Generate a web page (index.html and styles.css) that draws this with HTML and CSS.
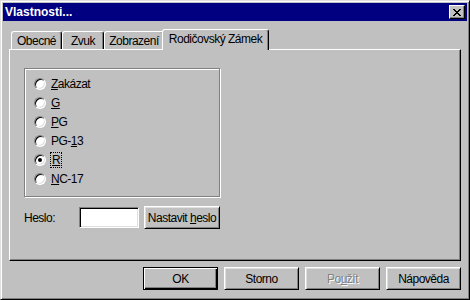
FILE: index.html
```html
<!DOCTYPE html>
<html lang="cs">
<head>
    <meta charset="UTF-8">
    <meta name="viewport" content="width=device-width, initial-scale=1.0">
    <title>Vlastnosti</title>
    <link rel="stylesheet" href="styles.css">
</head>
<body>
    <div class="window">
        <div class="titlebar">
            <span class="title">Vlastnosti...</span>
            <span class="close">
                <svg width="8" height="7" viewBox="0 0 8 7" shape-rendering="crispEdges">
                    <path d="M0 0h2v1h1v1h2V1h1V0h2v1H7v1H6v1H5v1h1v1h1v1h1v1H6V6H5V5H3v1H2v1H0V6h1V5h1V4h1V3H2V2H1V1H0z" fill="#000"/>
                </svg>
            </span>
        </div>

        <div class="content">
            <div class="tabs">
                <div class="tab tab-general">Obecné</div>
                <div class="tab tab-sound">Zvuk</div>
                <div class="tab tab-display">Zobrazení</div>
                <div class="tab active">Rodičovský Zámek</div>
            </div>

            <div class="panel">
                <div class="group">
                    <div class="radio"><span class="circle"></span><span><u>Z</u>akázat</span></div>
                    <div class="radio"><span class="circle"></span><span><u>G</u></span></div>
                    <div class="radio"><span class="circle"></span><span><u>P</u>G</span></div>
                    <div class="radio"><span class="circle"></span><span>PG-<u>1</u>3</span></div>
                    <div class="radio"><span class="circle checked"></span><span class="focus"><u>R</u></span></div>
                    <div class="radio"><span class="circle"></span><span><u>N</u>C-17</span></div>
                </div>

                <div class="password-row">
                    <span class="label">Heslo:</span>
                    <span class="input"></span>
                    <button class="btn wide">Nastavit <u>h</u>eslo</button>
                </div>
            </div>

            <div class="actions">
                <button class="btn default">OK</button>
                <button class="btn">Storno</button>
                <button class="btn disabled">Po<u>u</u>žít</button>
                <button class="btn">Nápověda</button>
            </div>
        </div>
    </div>
</body>
</html>
```

FILE: styles.css
```css
* {
    box-sizing: border-box;
}

body {
    margin: 0;
    font-family: "Liberation Sans", Arial, sans-serif;
    font-size: 12px;
    letter-spacing: -0.5px;
    color: #000;
    background-color: #c0c0c0;
}

.window {
    width: 470px;
    height: 300px;
    padding: 2px;
    display: flex;
    flex-direction: column;
    background-color: #c0c0c0;
    border: 1px solid;
    border-color: #dfdfdf #000 #000 #dfdfdf;
    box-shadow: inset 1px 1px #fff, inset -1px -1px #808080;
}

.titlebar {
    height: 18px;
    padding: 0 2px;
    display: flex;
    align-items: center;
    justify-content: space-between;
    background-color: #000080;
    color: #fff;
    font-weight: bold;
    letter-spacing: 0;
}

.close {
    width: 16px;
    height: 14px;
    display: flex;
    align-items: center;
    justify-content: center;
    background-color: #c0c0c0;
    border: 1px solid;
    border-color: #fff #000 #000 #fff;
    box-shadow: inset -1px -1px #808080;
}

.content {
    flex: 1;
    padding: 8px 6px 0 6px;
    display: flex;
    flex-direction: column;
}

.tabs {
    height: 20px;
    padding-left: 2px;
    display: flex;
    align-items: flex-end;
}

.tab {
    height: 18px;
    display: flex;
    align-items: center;
    justify-content: center;
    white-space: nowrap;
    border: 1px solid;
    border-bottom: none;
    border-color: #fff #000 #000 #fff;
    border-radius: 3px 3px 0 0;
    box-shadow: inset -1px 0 #808080;
}

.tab-general {
    width: 51px;
}

.tab-sound {
    width: 42px;
}

.tab-display {
    width: 60px;
}

.tab.active {
    width: 107px;
    height: 21px;
    margin: 0 -2px -1px;
    padding-bottom: 2px;
    position: relative;
    z-index: 1;
    background-color: #c0c0c0;
}

.panel {
    height: 212px;
    padding: 18px 0 0 14px;
    border: 1px solid;
    border-color: #fff #000 #000 #fff;
    box-shadow: inset -1px -1px #808080;
}

.group {
    width: 196px;
    height: 129px;
    padding: 5px 0 0 9px;
    border: 1px solid #808080;
    box-shadow: inset 1px 1px #fff, 1px 1px #fff;
}

.radio {
    height: 19px;
    display: flex;
    align-items: center;
    gap: 5px;
}

.circle {
    width: 12px;
    height: 12px;
    border-radius: 50%;
    background-color: #fff;
    border: 1px solid;
    border-color: #808080 #fff #fff #808080;
    box-shadow: inset 1px 1px #000, inset -1px -1px #dfdfdf;
    display: flex;
    align-items: center;
    justify-content: center;
}

.circle.checked::after {
    content: "";
    width: 4px;
    height: 4px;
    border-radius: 50%;
    background-color: #000;
}

.focus {
    outline: 1px dotted #000;
    padding: 0 1px;
}

.password-row {
    margin-top: 9px;
    display: flex;
    align-items: center;
}

.label {
    width: 55px;
}

.input {
    width: 60px;
    height: 21px;
    margin-right: 5px;
    background-color: #fff;
    border: 1px solid;
    border-color: #808080 #fff #fff #808080;
    box-shadow: inset 1px 1px #000, inset -1px -1px #dfdfdf;
}

.actions {
    margin-top: 6px;
    display: flex;
    justify-content: flex-end;
    gap: 6px;
}

.btn {
    width: 75px;
    height: 23px;
    padding: 0;
    white-space: nowrap;
    font-family: inherit;
    font-size: 12px;
    letter-spacing: -0.5px;
    color: #000;
    background-color: #c0c0c0;
    border: 1px solid;
    border-color: #fff #000 #000 #fff;
    box-shadow: inset 1px 1px #dfdfdf, inset -1px -1px #808080;
}

.btn.wide {
    width: 76px;
}

.btn.default {
    border-color: #000;
    box-shadow: inset 1px 1px #fff, inset -1px -1px #000, inset -2px -2px #808080;
}

.btn.disabled {
    color: #808080;
    text-shadow: 1px 1px #fff;
}
```
